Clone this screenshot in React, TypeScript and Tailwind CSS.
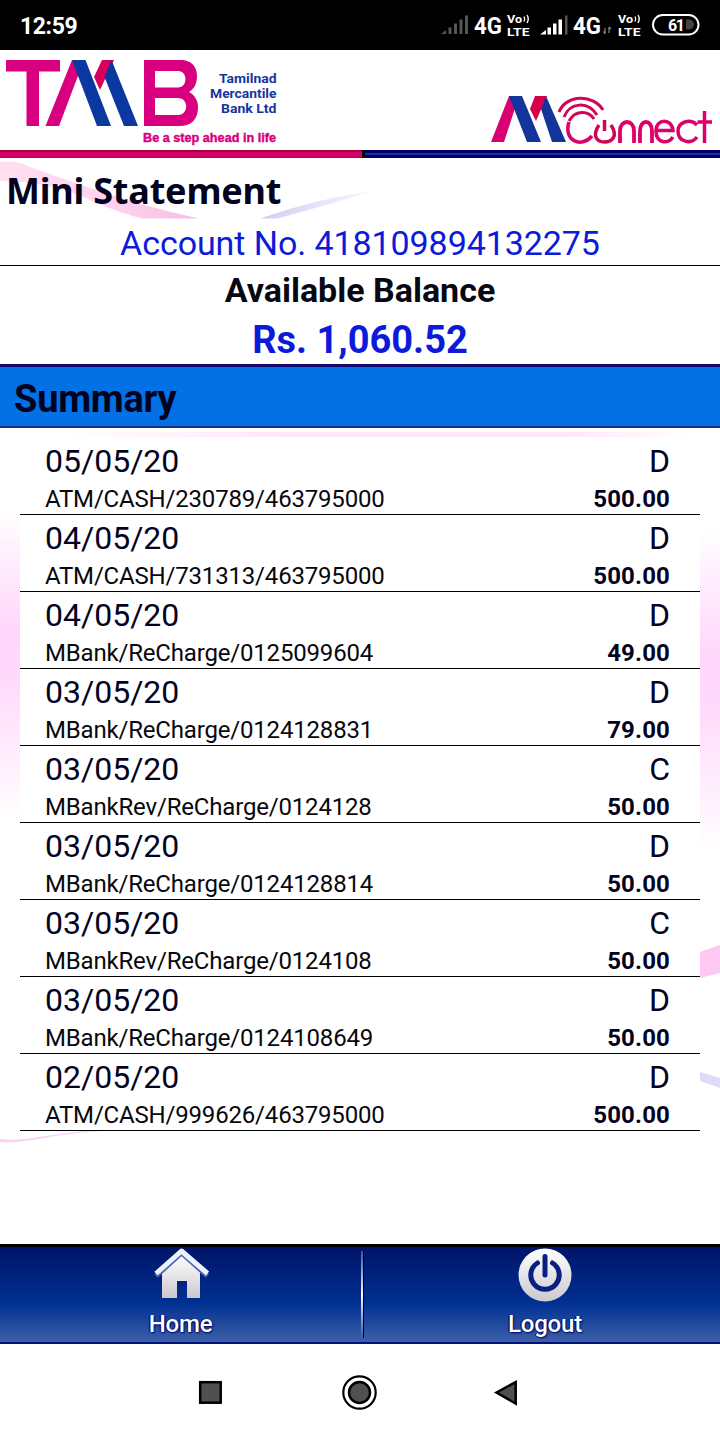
const transactions = [
  { date: "05/05/20", type: "D", detail: "ATM/CASH/230789/463795000", amount: "500.00" },
  { date: "04/05/20", type: "D", detail: "ATM/CASH/731313/463795000", amount: "500.00" },
  { date: "04/05/20", type: "D", detail: "MBank/ReCharge/0125099604", amount: "49.00" },
  { date: "03/05/20", type: "D", detail: "MBank/ReCharge/0124128831", amount: "79.00" },
  { date: "03/05/20", type: "C", detail: "MBankRev/ReCharge/0124128", amount: "50.00" },
  { date: "03/05/20", type: "D", detail: "MBank/ReCharge/0124128814", amount: "50.00" },
  { date: "03/05/20", type: "C", detail: "MBankRev/ReCharge/0124108", amount: "50.00" },
  { date: "03/05/20", type: "D", detail: "MBank/ReCharge/0124108649", amount: "50.00" },
  { date: "02/05/20", type: "D", detail: "ATM/CASH/999626/463795000", amount: "500.00" },
];

function StatusIcons() {
  return (
    <svg width="270" height="50" viewBox="440 0 270 50" className="block font-['Roboto',sans-serif]">
      <g fill="#555">
        <path d="M441 34L446 30V34Z" />
        <rect x="448.500" y="27.500" width="3" height="6.500" />
        <rect x="454" y="23.500" width="3" height="10.500" />
        <rect x="459.500" y="19.500" width="3" height="14.500" />
        <rect x="465" y="15.500" width="3" height="18.500" />
      </g>
      <g fill="#fff">
        <path d="M540 34.500L546 30V34.500Z" />
        <rect x="547.500" y="27.500" width="3.500" height="7" />
        <rect x="553" y="23.500" width="3.500" height="11" />
        <rect x="558.500" y="19.500" width="3.500" height="15" />
      </g>
      <rect x="565" y="15.500" width="2.500" height="19" fill="#555" />
      <g fill="#fff" fontWeight="500">
        <text x="474" y="34" fontSize="23" fontWeight="700" textLength="28" lengthAdjust="spacingAndGlyphs">4G</text>
        <text x="573" y="34" fontSize="23" fontWeight="700" textLength="28" lengthAdjust="spacingAndGlyphs">4G</text>
        {[507, 618].map((x) => (
          <g key={x}>
            <text x={x} y="22.500" fontSize="11" fontWeight="700" textLength="15" lengthAdjust="spacingAndGlyphs">Vo</text>
            <text x={x} y="35.500" fontSize="11" fontWeight="700" textLength="22.500" lengthAdjust="spacingAndGlyphs">LTE</text>
            <path d={`M${x + 17} 16.500q1.500 2.500 0 5M${x + 20} 15q2.500 4 0 8`} fill="none" stroke="#fff" strokeWidth="1.400" />
          </g>
        ))}
      </g>
      <path d="M605 34V28M603.500 31.500L605 34M609 27V33M609 27L611 29" stroke="#888" strokeWidth="1.200" fill="none" />
      <rect x="653" y="15" width="45.500" height="19.500" rx="9.750" fill="none" stroke="#fff" strokeWidth="2" />
      <path d="M686 19.500h3a5 5 0 0 1 0 10h-3z" fill="#444" />
      <text x="668" y="30.500" fontSize="16" fontWeight="700" fill="#fff" textLength="17">61</text>
    </svg>
  );
}

function BankLogo() {
  return (
    <svg width="290" height="100" viewBox="0 50 290 100" className="block">
      <path d="M6 60H60V71.500H39V126H26.500V71.500H6Z" fill="#d9007f" />
      <path d="M72 60H84L59 126H45.500Z" fill="#d9007f" />
      <path d="M102 60H114L100 90L94 77Z" fill="#d6005c" />
      <path d="M72 60H85.500L111 126H97Z" fill="#0a38a0" />
      <path d="M111.500 60L138 126H124L104.500 77Z" fill="#0a38a0" />
      <path fillRule="evenodd" d="M144 60H180C193 60 197 68 197 76C197 84 194 89 189 92C195 95 198 101 198 107C198 119 192 126 179 126H144ZM155 71V87.500H178C188 87.500 188 71 178 71ZM155 98V115H178C189 115 189 98 178 98Z" fill="#d9007f" />
      <g fill="#1635a0" className="font-['Roboto',sans-serif]" fontSize="13" fontWeight="700">
        <text x="219" y="83" textLength="57.500" lengthAdjust="spacingAndGlyphs">Tamilnad</text>
        <text x="210" y="98" textLength="66.500" lengthAdjust="spacingAndGlyphs">Mercantile</text>
        <text x="221" y="113" textLength="55.500" lengthAdjust="spacingAndGlyphs">Bank Ltd</text>
      </g>
      <text x="143" y="141.500" fontSize="12" fontWeight="700" fill="#d9007f" stroke="#d9007f" strokeWidth=".4" textLength="133" lengthAdjust="spacingAndGlyphs" className="font-['Liberation_Sans',sans-serif]">Be a step ahead in life</text>
    </svg>
  );
}

function ConnectLogo() {
  return (
    <svg width="230" height="60" viewBox="490 90 230 60" className="block">
      <path d="M509 96H519L504 142H491Z" fill="#d9006f" />
      <path d="M535 96H547L536 121L530 109Z" fill="#d6004c" />
      <path d="M509 96H522L541 142H527Z" fill="#12359b" />
      <path d="M546 96L566 142H552L541 109Z" fill="#12359b" />
      <g fill="none" stroke="#d00655" strokeWidth="3">
        <path d="M559 112C566 94 594 94 603 110" />
        <path d="M564 117C570 102 588 101 597 115" />
        <path d="M569 121C575 110 588 110 594 119" />
        <path d="M569 122C563 140 581 149 592 136" stroke="#dc0068" strokeWidth="3.500" />
        <path d="M599 125C591 137 598 142 604.500 142C611 142 619 137 611 125M604.500 120V131" strokeWidth="3.500" />
        <path d="M620 143V131C620 119 634 119 634 131V143M640 143V131C640 119 652 119 652 131V143" stroke="#dc0068" strokeWidth="3.800" />
        <path d="M656 130.500H673C672 118 656 118 656 131C656 143 668 145 673 137" stroke="#dc0068" strokeWidth="3.500" />
        <path d="M697 125C690 118 678 122 678 131C678 142 691 145 697 137M704.500 111V143M697.500 122H712" stroke="#dc0068" strokeWidth="3.500" />
      </g>
    </svg>
  );
}

export default function App() {
  return (
    <main className="flex h-[1440px] w-[720px] flex-col overflow-hidden bg-white font-['Roboto',sans-serif] text-[#03031f]">
      <div className="flex h-[50px] shrink-0 items-center justify-between bg-black pl-[20px] pr-[10px]">
        <span className="mt-[2px] text-[23px] font-bold leading-none tracking-[-0.4px] text-white">12:59</span>
        <StatusIcons />
      </div>
      <header className="shrink-0">
        <div className="flex h-[100px] items-end justify-between">
          <BankLogo />
          <ConnectLogo />
        </div>
        <div className="flex h-2">
          <div className="w-[362px] border-t-2 border-[#a30038] bg-linear-to-b from-[#d00072] via-[#df0065] to-[#b8004e]" />
          <div className="w-[3px] bg-black" />
          <div className="flex-1 border-b-[3px] border-t-[3px] border-[#00006a] bg-[#1c2cae]" />
        </div>
      </header>
      <div className="relative flex h-[61px] shrink-0 items-center pl-[6px]">
        <svg width="400" height="61" viewBox="0 158 400 61" className="absolute left-0 top-0">
          <defs>
            <linearGradient id="titlePink"><stop offset="0" stopColor="#ffe0f1" /><stop offset=".6" stopColor="#ffd0ee" /><stop offset="1" stopColor="#f6c0e0" /></linearGradient>
            <linearGradient id="titleBlue"><stop offset="0" stopColor="#d4caf4" /><stop offset="1" stopColor="#fafaff" /></linearGradient>
          </defs>
          <path d="M0 162Q17 160 30 167L90 188Q145 207 199 218.500H143Q122 214 90 200Q50 181 0 181Z" fill="url(#titlePink)" />
          <path d="M260 218.500Q315 199 377 190Q320 207 277 218.500Z" fill="url(#titleBlue)" />
        </svg>
        <h1 className="relative mt-[5px] font-['Noto_Sans','Open_Sans',sans-serif] text-[36px] font-bold leading-none tracking-[-0.2px]">Mini Statement</h1>
      </div>
      <div className="flex h-[47px] shrink-0 items-center justify-center border-b border-black text-[34px] leading-none text-[#0b1bd9]">
        <span className="mt-[1px] tracking-[-0.08px]">Account No. 418109894132275</span>
      </div>
      <div className="flex h-[98px] shrink-0 flex-col items-center text-[34px] font-bold leading-[49px]">
        <span className="text-[#080812]">Available Balance</span>
        <span className="relative top-px text-[38px] text-[#0b1bd9]">Rs. 1,060.52</span>
      </div>
      <h2 className="flex h-16 shrink-0 items-center border-b-2 border-t-[3px] border-b-[#173086] border-t-[#14086f] bg-[#0370e3] pl-[14px] text-[38px] font-bold leading-none">
        <span className="mt-[4px] tracking-[-0.25px]">Summary</span>
      </h2>
      <section className="relative h-[816px] shrink-0 px-5 pt-[10px]">
        <svg width="720" height="816" viewBox="0 428 720 816" className="absolute left-0 top-0">
          <defs>
            <linearGradient id="sideGlow" x1="0" y1="0" x2="0" y2="1">
              <stop offset="0" stopColor="#fff" /><stop offset=".38" stopColor="#ffd7fb" /><stop offset=".55" stopColor="#ffd9fb" /><stop offset="1" stopColor="#fff" />
            </linearGradient>
            <linearGradient id="topGlow"><stop offset="0" stopColor="#fff" /><stop offset=".35" stopColor="#ffe6f8" /><stop offset=".8" stopColor="#ffe6f8" /><stop offset="1" stopColor="#fff" /></linearGradient>
          </defs>
          <rect x="65" y="432" width="625" height="5" fill="url(#topGlow)" />
          <rect x="0" y="510" width="20" height="310" fill="url(#sideGlow)" />
          <rect x="700" y="530" width="20" height="320" fill="url(#sideGlow)" />
          <path d="M700 952L720 945V973L700 978Z" fill="#ffc8f2" />
          <path d="M700 1072L720 1078V1088L700 1081Z" fill="#dedafa" />
          <path d="M0 1139Q15 1141 32 1138L82 1131H104Q80 1132 55 1136Q15 1144 0 1142Z" fill="#f9d3ef" />
        </svg>
        <ul className="relative">
          {transactions.map((item, index) => (
            <li key={index} className="h-[77px] border-b border-black pl-[25px] pr-[30px]">
              <div className="flex h-[46px] items-center justify-between text-[32px] leading-none">
                <span>{item.date}</span>
                <span>{item.type}</span>
              </div>
              <div className="flex h-[30px] items-center justify-between text-[24px] leading-none">
                <span className="tracking-[-0.18px] text-[#08080c]">{item.detail}</span>
                <span className="font-bold tracking-[0.15px]">{item.amount}</span>
              </div>
            </li>
          ))}
        </ul>
      </section>
      <footer className="flex h-[100px] shrink-0 border-b-2 border-t-[3px] border-b-[#00107c] border-t-black bg-linear-to-b from-[#001469] from-0% via-[#003093] via-60% to-[#3c60a8] text-white">
        <button className="flex w-[361px] flex-col items-center">
          <svg width="60" height="60" viewBox="0 0 60 60" className="block">
            <defs><linearGradient id="silver" x1="0" y1="0" x2="0" y2="1"><stop stopColor="#fff" /><stop offset="1" stopColor="#cbc9cd" /></linearGradient></defs>
            <path d="M30 7L49 25V51H36V34H26V51H11V25Z" fill="url(#silver)" />
            <path d="M5 29L30.500 6L56.500 29" fill="none" stroke="#4a65ac" strokeWidth="5" />
            <path d="M5 26.500L30.500 4L56.500 26.500" fill="none" stroke="#eef2ff" strokeWidth="5" strokeLinejoin="round" />
          </svg>
          <span className="mt-[5px] text-[24px] font-medium leading-none tracking-[-0.2px] [text-shadow:1px_1px_2px_#000060,-1px_0_1px_#000060]">Home</span>
        </button>
        <div className="my-1 w-[3px] border-r border-black bg-linear-to-b from-[#36539d] via-white to-[#395ca5]" />
        <button className="flex flex-1 flex-col items-center pl-[6px]">
          <svg width="60" height="60" viewBox="0 0 60 60" className="block">
            <circle cx="30" cy="28" r="26.500" fill="url(#silver)" />
            <path d="M22.500 16A14.200 14.200 0 1 0 37.500 16M30 9.500V28" fill="none" stroke="#092080" strokeWidth="5" strokeLinecap="round" />
          </svg>
          <span className="mt-[5px] text-[24px] font-medium leading-none tracking-[-0.2px] [text-shadow:1px_1px_2px_#000060,-1px_0_1px_#000060]">Logout</span>
        </button>
      </footer>
      <nav className="h-24 shrink-0">
        <svg width="720" height="96" viewBox="0 1344 720 96" className="block" stroke="#000" strokeWidth="2.500" fill="#505050">
          <rect x="200.200" y="1382.200" width="20.500" height="20.500" />
          <circle cx="359.500" cy="1392.500" r="16.200" fill="#fff" strokeWidth="2.200" />
          <circle cx="359.500" cy="1392.500" r="10.500" />
          <path d="M496.500 1392.500L515.700 1382V1403.500Z" />
        </svg>
      </nav>
    </main>
  );
}
